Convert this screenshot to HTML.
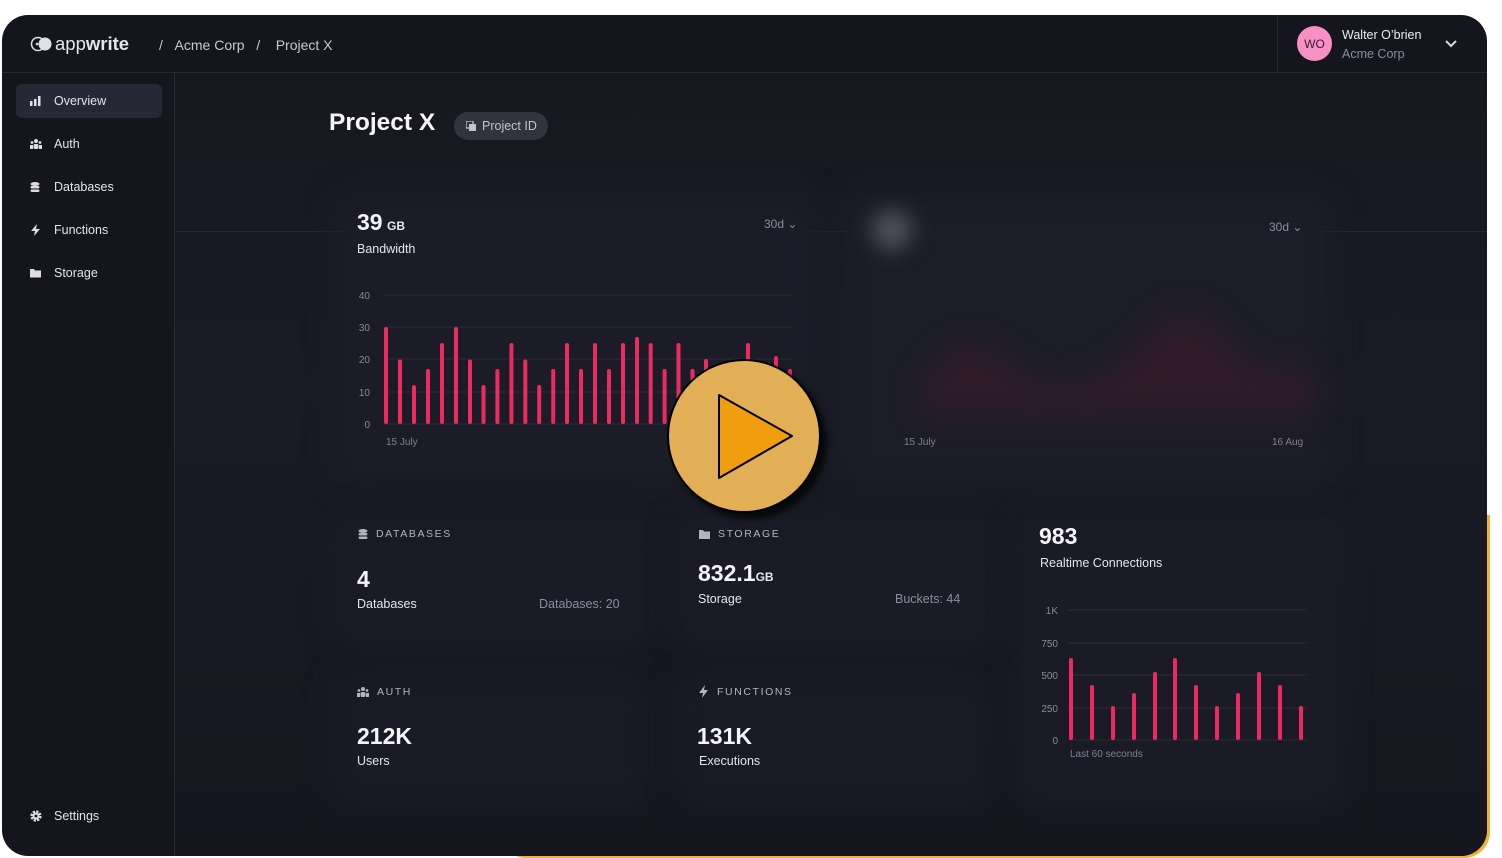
<!DOCTYPE html>
<html><head><meta charset="utf-8"><style>
*{margin:0;padding:0;box-sizing:border-box}
body{width:1502px;height:858px;background:#fff;position:relative;overflow:hidden;font-family:"Liberation Sans",sans-serif;color:#e8e8ef}
.a{position:absolute}
.orange{left:500px;top:515px;width:990px;height:343px;background:#f0b23c;border-radius:0 0 26px 26px}
.frame{left:2px;top:15px;width:1485px;height:841px;background:#15151e;border-radius:26px;overflow:hidden}
.muted{color:#8c8c9c}
.nav{left:14px;width:146px;height:34px;border-radius:6px;font-size:12.5px;color:#e4e4ec;display:flex;align-items:center;padding-left:14px}
.nav svg{margin-right:12px}
.lbl{font-size:10.5px;letter-spacing:1.6px;color:#b4b4c0;display:flex;align-items:center}
.lbl svg{margin-right:8px}
.big{font-size:23px;font-weight:bold;color:#f4f4f8}
.sm{font-size:12.5px;color:#e4e4ec}
.ax{font-size:10px;color:#80808f}
.cb{position:absolute;border-radius:16px;filter:blur(14px)}
</style></head><body>
<div class="a orange"></div>
<div class="a frame">
  <div class="a" style="left:173px;top:57px;width:1312px;height:784px;background:linear-gradient(180deg,#171720,#1a1a25 40%,#16161f)"></div>
  <div class="a" style="left:0;top:57px;width:1485px;height:1px;background:#2a2a36"></div>
  <div class="a" style="left:172px;top:57px;width:1px;height:784px;background:#2a2a36"></div>
  <div class="a" style="left:173px;top:216px;width:1312px;height:1px;background:#272733"></div>
  <div class="a" style="left:1275px;top:0;width:1px;height:57px;background:#2a2a36"></div>
  <svg class="a" style="left:28px;top:21px" width="24" height="16" viewBox="0 0 24 16"><circle cx="8" cy="8" r="6.5" fill="none" stroke="#e0e0e8" stroke-width="1.5"/><circle cx="15" cy="8" r="6.5" fill="#e0e0e8"/><circle cx="7" cy="8" r="1.3" fill="#e0e0e8"/></svg>
  <div class="a" style="left:53px;top:18px;font-size:18.5px;color:#e6e6ee">app<b>write</b></div>
  <div class="a" style="left:157px;top:22px;font-size:14px;color:#c8c8d2">/&nbsp;&nbsp;&nbsp;Acme Corp&nbsp;&nbsp;&nbsp;/&nbsp;&nbsp;&nbsp;&nbsp;Project X</div>
  <div class="a" style="left:1295px;top:11px;width:35px;height:35px;border-radius:50%;background:#f790c4;color:#3a2030;font-size:12px;display:flex;align-items:center;justify-content:center">WO</div>
  <div class="a" style="left:1340px;top:13px;font-size:12.5px;color:#ececf2">Walter O’brien</div>
  <div class="a" style="left:1340px;top:32px;font-size:12.5px;color:#8c8c9c">Acme Corp</div>
  <svg class="a" style="left:1443px;top:25px" width="12" height="8"><path d="M1 1l5 5 5-5" fill="none" stroke="#d8d8e0" stroke-width="2"/></svg>
  <div class="a nav" style="top:69px;background:#272735"><svg width="12" height="10"><rect x="0" y="5" width="2.5" height="5" fill="#e0e0e8"/><rect x="4" y="3" width="2.5" height="7" fill="#e0e0e8"/><rect x="8" y="0" width="2.5" height="10" fill="#e0e0e8"/></svg>Overview</div>
  <div class="a nav" style="top:112px"><svg width="12" height="10"><circle cx="6" cy="2" r="2" fill="#ddd"/><circle cx="2" cy="3.5" r="1.4" fill="#ddd"/><circle cx="10" cy="3.5" r="1.4" fill="#ddd"/><rect x="3.5" y="5" width="5" height="5" rx="1.5" fill="#ddd"/><rect x="0" y="6" width="3" height="4" fill="#ddd"/><rect x="9" y="6" width="3" height="4" fill="#ddd"/></svg>Auth</div>
  <div class="a nav" style="top:155px"><svg width="12" height="11"><ellipse cx="5" cy="2" rx="4.5" ry="2" fill="#ddd"/><rect x="0.5" y="4" width="9" height="2.5" rx="1.2" fill="#ddd"/><rect x="0.5" y="7.5" width="9" height="2.5" rx="1.2" fill="#ddd"/></svg>Databases</div>
  <div class="a nav" style="top:198px"><svg width="12" height="12"><path d="M7 0L1 7h4l-1 5 6-7H6z" fill="#ddd"/></svg>Functions</div>
  <div class="a nav" style="top:241px"><svg width="12" height="10"><path d="M0 1h4l1 1.5h6v7H0z" fill="#ddd"/></svg>Storage</div>
  <div class="a nav" style="top:784px"><svg width="12" height="12"><circle cx="6" cy="6" r="4.2" fill="none" stroke="#ddd" stroke-width="2.8" stroke-dasharray="2.2 1.1"/><circle cx="6" cy="6" r="3.5" fill="#ddd"/><circle cx="6" cy="6" r="1.4" fill="#15151e"/></svg>Settings</div>
  <div class="a" style="left:327px;top:94px;font-size:24.5px;font-weight:bold;color:#f6f6fa">Project X</div>
  <div class="a" style="left:452px;top:97px;width:94px;height:28px;border-radius:14px;background:#33333f;font-size:12.5px;color:#c4c4d0;display:flex;align-items:center;padding-left:12px"><svg width="10" height="10" style="margin-right:6px"><rect x="0" y="0" width="7" height="7" fill="none" stroke="#c4c4d0" stroke-width="1.3"/><rect x="3" y="3" width="7" height="7" fill="#c4c4d0"/></svg>Project ID</div>
  <div class="cb" style="left:333px;top:180px;width:485px;height:290px;background:#1c1c28"></div>
  <div class="cb" style="left:838px;top:180px;width:490px;height:290px;background:#1d1d29"></div>
  <div class="cb" style="left:333px;top:500px;width:315px;height:130px;background:#1b1b27"></div>
  <div class="cb" style="left:675px;top:500px;width:315px;height:130px;background:#1b1b27"></div>
  <div class="cb" style="left:333px;top:660px;width:315px;height:130px;background:#1a1a26"></div>
  <div class="cb" style="left:675px;top:660px;width:315px;height:130px;background:#1a1a26"></div>
  <div class="cb" style="left:1015px;top:500px;width:325px;height:290px;background:#1b1b27"></div>
  <div class="a" style="left:355px;top:194px"><span class="big">39</span> <span style="font-size:12px;font-weight:bold">GB</span></div>
  <div class="a sm" style="left:355px;top:227px">Bandwidth</div>
  <div class="a muted" style="left:762px;top:202px;font-size:12px">30d &#8964;</div>
  <div class="a muted" style="left:1267px;top:205px;font-size:12px">30d &#8964;</div>
  <svg class="a" style="left:0;top:0" width="1485" height="841" viewBox="2 15 1485 841">
    <g stroke="#2c2c3a" stroke-width="1"><line x1="383" y1="295" x2="793" y2="295"/><line x1="383" y1="327" x2="793" y2="327"/><line x1="383" y1="359" x2="793" y2="359"/><line x1="383" y1="392" x2="793" y2="392"/><line x1="383" y1="424" x2="793" y2="424"/>
    <line x1="1068" y1="610" x2="1306" y2="610"/><line x1="1068" y1="643" x2="1306" y2="643"/><line x1="1068" y1="675" x2="1306" y2="675"/><line x1="1068" y1="708" x2="1306" y2="708"/><line x1="1068" y1="740" x2="1306" y2="740"/></g>
    <g fill="#8a8a98" font-size="10" font-family="Liberation Sans" text-anchor="end"><text x="370" y="299">40</text><text x="370" y="331">30</text><text x="370" y="363">20</text><text x="370" y="396">10</text><text x="370" y="428">0</text>
    <text x="1058" y="614">1K</text><text x="1058" y="647">750</text><text x="1058" y="679">500</text><text x="1058" y="712">250</text><text x="1058" y="744">0</text></g>
    <g fill="#ec2a5f">
      <rect x="384" y="327" width="4" height="97" rx="2"/><rect x="398" y="359.5" width="4" height="64.5" rx="2"/><rect x="412" y="385" width="4" height="39" rx="2"/><rect x="426" y="369" width="4" height="55" rx="2"/><rect x="440" y="343" width="4" height="81" rx="2"/><rect x="454" y="327" width="4" height="97" rx="2"/><rect x="468" y="359.5" width="4" height="64.5" rx="2"/><rect x="481.5" y="385" width="4" height="39" rx="2"/><rect x="495.4" y="369" width="4" height="55" rx="2"/><rect x="509.4" y="343" width="4" height="81" rx="2"/><rect x="523.3" y="359.5" width="4" height="64.5" rx="2"/><rect x="537.2" y="385" width="4" height="39" rx="2"/><rect x="551.2" y="369" width="4" height="55" rx="2"/><rect x="565" y="343" width="4" height="81" rx="2"/><rect x="579" y="369" width="4" height="55" rx="2"/><rect x="593" y="343" width="4" height="81" rx="2"/><rect x="607" y="369" width="4" height="55" rx="2"/><rect x="621" y="343" width="4" height="81" rx="2"/><rect x="635" y="337" width="4" height="87" rx="2"/><rect x="648.7" y="343" width="4" height="81" rx="2"/><rect x="662.6" y="369" width="4" height="55" rx="2"/><rect x="676.5" y="343" width="4" height="81" rx="2"/><rect x="690.5" y="369" width="4" height="55" rx="2"/><rect x="704" y="359" width="4" height="65" rx="2"/><rect x="718" y="385" width="4" height="39" rx="2"/><rect x="732" y="369" width="4" height="55" rx="2"/><rect x="746" y="343" width="4" height="81" rx="2"/><rect x="760" y="369" width="4" height="55" rx="2"/><rect x="774" y="356" width="4" height="68" rx="2"/><rect x="788" y="369" width="4" height="55" rx="2"/>
      <rect x="1069" y="658" width="4" height="82" rx="2"/><rect x="1090" y="685" width="4" height="55" rx="2"/><rect x="1111" y="706" width="4" height="34" rx="2"/><rect x="1132" y="693" width="4" height="47" rx="2"/><rect x="1153" y="672" width="4" height="68" rx="2"/><rect x="1173" y="658" width="4" height="82" rx="2"/><rect x="1194" y="685" width="4" height="55" rx="2"/><rect x="1215" y="706" width="4" height="34" rx="2"/><rect x="1236" y="693" width="4" height="47" rx="2"/><rect x="1257" y="672" width="4" height="68" rx="2"/><rect x="1278" y="685" width="4" height="55" rx="2"/><rect x="1299" y="706" width="4" height="34" rx="2"/>
    </g>
  </svg>
  <div class="a ax" style="left:384px;top:422px">15 July</div>
  <div class="a" style="left:870px;top:195px;width:40px;height:40px;border-radius:50%;background:#50505c;filter:blur(10px)"></div>
  <svg class="a" style="left:880px;top:260px;filter:blur(14px)" width="440" height="150"><path d="M40 110 Q80 40 130 90 T260 70 Q300 10 340 60 T430 90 L430 140 L40 140Z" fill="#331b2c" opacity=".8"/></svg>
  <div class="a ax" style="left:902px;top:422px">15 July</div>
  <div class="a ax" style="left:1270px;top:422px">16 Aug</div>
  <div class="a lbl" style="left:356px;top:513px"><svg width="10" height="11"><ellipse cx="5" cy="2" rx="4.5" ry="2" fill="#b4b4c0"/><rect x="0.5" y="4" width="9" height="2.5" rx="1.2" fill="#b4b4c0"/><rect x="0.5" y="7.5" width="9" height="2.5" rx="1.2" fill="#b4b4c0"/></svg>DATABASES</div>
  <div class="a big" style="left:355px;top:551px">4</div>
  <div class="a sm" style="left:355px;top:582px">Databases</div>
  <div class="a muted" style="left:537px;top:582px;font-size:12.5px">Databases: 20</div>
  <div class="a lbl" style="left:697px;top:513px"><svg width="11" height="9"><path d="M0 0h4l1 1.5h6v7.5H0z" fill="#b4b4c0"/></svg>STORAGE</div>
  <div class="a" style="left:696px;top:545px"><span class="big">832.1</span><span style="font-size:12px;font-weight:bold">GB</span></div>
  <div class="a sm" style="left:696px;top:577px">Storage</div>
  <div class="a muted" style="left:893px;top:577px;font-size:12.5px">Buckets: 44</div>
  <div class="a lbl" style="left:355px;top:671px"><svg width="12" height="10"><circle cx="6" cy="2" r="2" fill="#b4b4c0"/><circle cx="2" cy="3.5" r="1.4" fill="#b4b4c0"/><circle cx="10" cy="3.5" r="1.4" fill="#b4b4c0"/><rect x="3.5" y="5" width="5" height="5" rx="1.5" fill="#b4b4c0"/><rect x="0" y="6" width="3" height="4" fill="#b4b4c0"/><rect x="9" y="6" width="3" height="4" fill="#b4b4c0"/></svg>AUTH</div>
  <div class="a big" style="left:355px;top:708px">212K</div>
  <div class="a sm" style="left:355px;top:739px">Users</div>
  <div class="a lbl" style="left:697px;top:670px"><svg width="10" height="13"><path d="M6 0L0 8h4l-1 5 6-8H5z" fill="#b4b4c0"/></svg>FUNCTIONS</div>
  <div class="a big" style="left:695px;top:708px">131K</div>
  <div class="a sm" style="left:697px;top:739px">Executions</div>
  <div class="a big" style="left:1037px;top:508px">983</div>
  <div class="a sm" style="left:1038px;top:541px">Realtime Connections</div>
  <div class="a ax" style="left:1068px;top:734px">Last 60 seconds</div>
  <div class="a" style="left:671px;top:350px;width:154px;height:154px;border-radius:50%;background:#05090a;filter:blur(3px)"></div>
  <svg class="a" style="left:663px;top:341px" width="160" height="160"><circle cx="79" cy="80" r="76" fill="#e2af56" stroke="#000" stroke-width="2"/><path d="M54 39 L54 122 L127 80 Z" fill="#f09e10" stroke="#000" stroke-width="2" stroke-linejoin="round"/></svg>
</div>
</body></html>
